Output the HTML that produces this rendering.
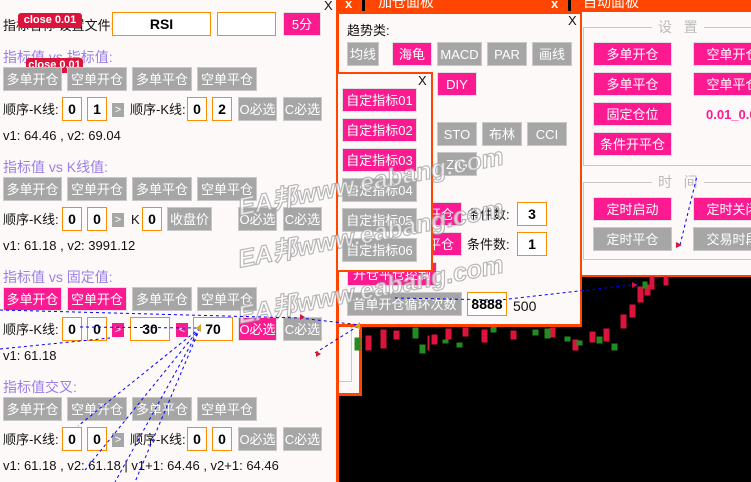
<!DOCTYPE html>
<html><head><meta charset="utf-8">
<style>
*{margin:0;padding:0;box-sizing:border-box}
body{width:751px;height:482px;overflow:hidden;position:relative;background:#000;font-family:"Liberation Sans","Noto Sans CJK SC",sans-serif;font-size:13px;color:#111}
.a{position:absolute}
.t{position:absolute;white-space:nowrap;line-height:16px}
.b{position:absolute;height:24px;line-height:24px;text-align:center;color:#fff;font-size:13px;background:#a6a6a6;border:1px solid #c8c8c8;white-space:nowrap;overflow:hidden}
.p{background:#fc1a90;border-color:#e0e0e0}
.i{position:absolute;height:24px;line-height:22px;text-align:center;border:1px solid #ff8c00;background:#fff;font-weight:bold;font-size:14px;color:#000}
.s{position:absolute;width:12px;height:14px;line-height:14px;text-align:center;color:#fff;background:#a6a6a6;font-size:11px}
.h{color:#9b7ee8;font-size:14px}
.badge{position:absolute;height:15px;line-height:15px;background:#dc143c;color:#fff;font-weight:bold;font-size:11px;border-radius:3px;text-align:center}
.wm{position:absolute;white-space:nowrap;line-height:24px;transform:rotate(-11deg);transform-origin:left top;font-size:25px;font-weight:bold;font-style:italic;color:rgba(255,255,255,0.7);-webkit-text-stroke:1.2px rgba(160,160,160,0.75)}
</style></head><body>
<!-- left panel -->
<div class="a" style="left:0;top:0;width:336px;height:482px;background:#fdf9f8"></div>
<div class="a" style="left:336px;top:0;width:3px;height:482px;background:#ff4500"></div>
<div class="t" style="left:324px;top:-2px;font-size:13px">X</div>
<div class="t" style="left:3px;top:18px">指标名称 设置文件:</div>
<div class="badge" style="left:18px;top:13px;width:64px">close 0.01</div>
<div class="i" style="left:112px;top:12px;width:99px">RSI</div>
<div class="i" style="left:217px;top:12px;width:59px"></div>
<div class="b p" style="left:283px;top:12px;width:38px;height:24px">5分</div>

<div class="t h" style="left:3px;top:49px">指标值 vs 指标值:</div>
<div class="badge" style="left:26px;top:58px;width:57px">close 0.01</div>
<div class="b" style="left:3px;top:67px;width:59px">多单开仓</div>
<div class="b" style="left:67px;top:67px;width:60px">空单开仓</div>
<div class="b" style="left:132px;top:67px;width:60px">多单平仓</div>
<div class="b" style="left:197px;top:67px;width:60px">空单平仓</div>
<div class="t" style="left:3px;top:102px">顺序-K线:</div>
<div class="i" style="left:62px;top:97px;width:20px">0</div>
<div class="i" style="left:87px;top:97px;width:20px">1</div>
<div class="s" style="left:112px;top:103px">&gt;</div>
<div class="t" style="left:130px;top:102px">顺序-K线:</div>
<div class="i" style="left:187px;top:97px;width:20px">0</div>
<div class="i" style="left:212px;top:97px;width:20px">2</div>
<div class="b" style="left:238px;top:97px;width:39px">O必选</div>
<div class="b" style="left:283px;top:97px;width:39px">C必选</div>
<div class="t" style="left:3px;top:128px">v1: 64.46 , v2: 69.04</div>

<div class="t h" style="left:3px;top:159px">指标值 vs K线值:</div>
<div class="b" style="left:3px;top:177px;width:59px">多单开仓</div>
<div class="b" style="left:67px;top:177px;width:60px">空单开仓</div>
<div class="b" style="left:132px;top:177px;width:60px">多单平仓</div>
<div class="b" style="left:197px;top:177px;width:60px">空单平仓</div>
<div class="t" style="left:3px;top:212px">顺序-K线:</div>
<div class="i" style="left:62px;top:207px;width:20px">0</div>
<div class="i" style="left:87px;top:207px;width:20px">0</div>
<div class="s" style="left:112px;top:213px">&gt;</div>
<div class="t" style="left:131px;top:212px">K</div>
<div class="i" style="left:142px;top:207px;width:20px">0</div>
<div class="b" style="left:167px;top:207px;width:45px">收盘价</div>
<div class="b" style="left:238px;top:207px;width:39px">O必选</div>
<div class="b" style="left:283px;top:207px;width:39px">C必选</div>
<div class="t" style="left:3px;top:238px">v1: 61.18 , v2: 3991.12</div>

<div class="t h" style="left:3px;top:269px">指标值 vs 固定值:</div>
<div class="b p" style="left:3px;top:287px;width:59px">多单开仓</div>
<div class="b p" style="left:67px;top:287px;width:60px">空单开仓</div>
<div class="b" style="left:132px;top:287px;width:60px">多单平仓</div>
<div class="b" style="left:197px;top:287px;width:60px">空单平仓</div>
<div class="t" style="left:3px;top:322px">顺序-K线:</div>
<div class="i" style="left:62px;top:317px;width:20px">0</div>
<div class="i" style="left:87px;top:317px;width:20px">0</div>
<div class="s" style="left:112px;top:323px;background:#fc1a90">&gt;</div>
<div class="i" style="left:130px;top:317px;width:40px">30</div>
<div class="s" style="left:176px;top:323px;background:#fc1a90">&lt;</div>
<div class="i" style="left:193px;top:317px;width:40px">70</div>
<div class="b p" style="left:238px;top:317px;width:39px">O必选</div>
<div class="b" style="left:283px;top:317px;width:39px">C必选</div>
<div class="t" style="left:3px;top:348px">v1: 61.18</div>

<div class="t h" style="left:3px;top:379px">指标值交叉:</div>
<div class="b" style="left:3px;top:397px;width:59px">多单开仓</div>
<div class="b" style="left:67px;top:397px;width:60px">空单开仓</div>
<div class="b" style="left:132px;top:397px;width:60px">多单平仓</div>
<div class="b" style="left:197px;top:397px;width:60px">空单平仓</div>
<div class="t" style="left:3px;top:432px">顺序-K线:</div>
<div class="i" style="left:62px;top:427px;width:20px">0</div>
<div class="i" style="left:87px;top:427px;width:20px">0</div>
<div class="s" style="left:112px;top:433px">&gt;</div>
<div class="t" style="left:130px;top:432px">顺序-K线:</div>
<div class="i" style="left:187px;top:427px;width:20px">0</div>
<div class="i" style="left:212px;top:427px;width:20px">0</div>
<div class="b" style="left:238px;top:427px;width:39px">O必选</div>
<div class="b" style="left:283px;top:427px;width:39px">C必选</div>
<div class="t" style="left:3px;top:458px">v1: 61.18 , v2: 61.18 | v1+1: 64.46 , v2+1: 64.46</div>

<!-- small box under middle panel -->
<div class="a" style="left:336px;top:326px;width:26px;height:70px;background:#fdf9f8;border:3px solid #ff4500;border-top:none"></div>
<div class="a" style="left:339px;top:326px;width:13px;height:56px;border:1px solid #c8c8c8;border-left:none;border-top:none"></div>

<!-- right panel -->
<div class="a" style="left:580px;top:0;width:171px;height:277px;background:#ff4500"></div>
<div class="t" style="left:583px;top:-6px;color:#fff;font-size:14px">自动面板</div>
<div class="a" style="left:582px;top:12px;width:169px;height:263px;background:#fdf9f8"></div>
<div class="a" style="left:583px;top:27px;width:170px;height:139px;border:1px solid #c8c8c8"></div>
<div class="t" style="left:652px;top:19px;background:#fdf9f8;color:#bbb;padding:0 6px;font-size:14px">设&nbsp;&nbsp;&nbsp;置</div>
<div class="b p" style="left:593px;top:42px;width:79px">多单开仓</div>
<div class="b p" style="left:693px;top:42px;width:79px">空单开仓</div>
<div class="b p" style="left:593px;top:72px;width:79px">多单平仓</div>
<div class="b p" style="left:693px;top:72px;width:79px">空单平仓</div>
<div class="b p" style="left:593px;top:102px;width:79px">固定仓位</div>
<div class="t" style="left:706px;top:107px;color:#fc1a90;font-weight:bold;font-size:13px">0.01_0.01</div>
<div class="b p" style="left:593px;top:132px;width:79px">条件开平仓</div>
<div class="a" style="left:583px;top:182px;width:170px;height:78px;border:1px solid #c8c8c8"></div>
<div class="t" style="left:652px;top:174px;background:#fdf9f8;color:#bbb;padding:0 6px;font-size:14px">时&nbsp;&nbsp;&nbsp;间</div>
<div class="b p" style="left:593px;top:197px;width:79px">定时启动</div>
<div class="b p" style="left:693px;top:197px;width:79px">定时关闭</div>
<div class="b" style="left:593px;top:227px;width:79px">定时平仓</div>
<div class="b" style="left:693px;top:227px;width:79px">交易时段</div>

<!-- candles -->
<svg class="a" style="left:0;top:0" width="751" height="482">
<g fill="#dc143c" stroke="#dc143c">
<rect x="366" y="336" width="5" height="14"/><rect x="381" y="330" width="5" height="18"/><rect x="394" y="331" width="5" height="8"/><rect x="432" y="335" width="5" height="9"/>
<rect x="428" y="336" width="1" height="14"/><rect x="446" y="329" width="5" height="10"/><rect x="463" y="328" width="5" height="8"/><rect x="482" y="330" width="5" height="12"/>
<rect x="511" y="331" width="5" height="8"/><rect x="550" y="328" width="5" height="9"/><rect x="573" y="340" width="5" height="10"/><rect x="590" y="332" width="5" height="10"/>
<rect x="604" y="329" width="5" height="12"/><rect x="621" y="315" width="5" height="13"/><rect x="630" y="305" width="5" height="12"/><rect x="638" y="287" width="5" height="15"/>
<rect x="645" y="285" width="5" height="10"/><rect x="650" y="277" width="4" height="12"/><rect x="664" y="277" width="4" height="8"/>
</g>
<g fill="#228b22" stroke="#228b22">
<rect x="355" y="338" width="5" height="12"/><rect x="413" y="328" width="5" height="10"/><rect x="420" y="345" width="5" height="8"/><rect x="443" y="340" width="5" height="3"/>
<rect x="457" y="343" width="5" height="4"/><rect x="491" y="327" width="5" height="5"/><rect x="533" y="330" width="5" height="5"/><rect x="545" y="329" width="5" height="9"/>
<rect x="565" y="337" width="5" height="4"/><rect x="577" y="341" width="5" height="4"/><rect x="597" y="337" width="5" height="6"/><rect x="612" y="344" width="5" height="6"/><rect x="643" y="282" width="4" height="6"/>
</g>
</svg>

<!-- middle panel -->
<div class="a" style="left:336px;top:0;width:246px;height:327px;background:#ff4500"></div>
<div class="t" style="left:345px;top:-4px;color:#fff;font-weight:bold">x</div>
<div class="a" style="left:362px;top:0;width:3px;height:11px;background:#000"></div>
<div class="t" style="left:378px;top:-6px;color:#fff;font-size:14px">加仓面板</div>
<div class="t" style="left:551px;top:-4px;color:#fff;font-weight:bold">x</div>
<div class="a" style="left:568px;top:0;width:3px;height:11px;background:#000"></div>
<div class="a" style="left:339px;top:14px;width:241px;height:310px;background:#fdf9f8"></div>
<div class="t" style="left:568px;top:13px">X</div>
<div class="t" style="left:347px;top:23px">趋势类:</div>
<div class="b" style="left:347px;top:42px;width:32px">均线</div>
<div class="b p" style="left:392px;top:42px;width:40px">海龟</div>
<div class="b" style="left:437px;top:42px;width:45px">MACD</div>
<div class="b" style="left:487px;top:42px;width:40px">PAR</div>
<div class="b" style="left:532px;top:42px;width:40px">画线</div>
<div class="b p" style="left:437px;top:72px;width:40px">DIY</div>
<div class="b" style="left:437px;top:122px;width:40px">STO</div>
<div class="b" style="left:482px;top:122px;width:40px">布林</div>
<div class="b" style="left:527px;top:122px;width:40px">CCI</div>
<div class="b" style="left:437px;top:152px;width:40px">ZIG</div>
<div class="b p" style="left:420px;top:202px;width:42px">开仓</div>
<div class="t" style="left:467px;top:207px">条件数:</div>
<div class="i" style="left:517px;top:202px;width:30px">3</div>
<div class="b p" style="left:420px;top:232px;width:42px">平仓</div>
<div class="t" style="left:467px;top:237px">条件数:</div>
<div class="i" style="left:517px;top:232px;width:30px">1</div>
<div class="b p" style="left:347px;top:262px;width:90px">开仓平仓控制</div>
<div class="b" style="left:347px;top:292px;width:115px">首单开仓循环次数</div>
<div class="i" style="left:467px;top:292px;width:40px">8888</div>
<div class="t" style="left:513px;top:298px;font-size:14px">500</div>

<!-- custom indicators popup -->
<div class="a" style="left:336px;top:72px;width:97px;height:200px;background:#fdf9f8;border:2px solid #ff4500"></div>
<div class="t" style="left:418px;top:73px">X</div>
<div class="b p" style="left:342px;top:88px;width:75px">自定指标01</div>
<div class="b p" style="left:342px;top:118px;width:75px">自定指标02</div>
<div class="b p" style="left:342px;top:148px;width:75px">自定指标03</div>
<div class="b" style="left:342px;top:178px;width:75px">自定指标04</div>
<div class="b" style="left:342px;top:208px;width:75px">自定指标05</div>
<div class="b" style="left:342px;top:238px;width:75px">自定指标06</div>

<!-- watermarks -->
<div class="wm" style="left:236px;top:196px">EA邦www.eabang.com</div>
<div class="wm" style="left:236px;top:248px">EA邦www.eabang.com</div>
<div class="wm" style="left:236px;top:304px">EA邦www.eabang.com</div>

<!-- dashed lines -->
<svg class="a" style="left:0;top:0" width="751" height="482">
<g stroke="#0000ff" stroke-width="1" stroke-dasharray="3,3" fill="none">
<path d="M0 310 L300 318 L360 325"/><path d="M80 327 L200 328"/><path d="M0 349 L110 338"/>
<path d="M200 328 L78 426"/><path d="M200 328 L115 482"/><path d="M200 328 L135 482"/><path d="M200 328 L85 470"/>
<path d="M315 353 L360 325"/><path d="M395 298 L500 300 L640 284"/><path d="M680 245 L697 176"/>
</g>
<g fill="#dc143c"><path d="M300 314 l5 3 -5 3z"/><path d="M316 351 l5 3 -5 3z"/><path d="M676 242 l6 3 -6 3z"/><path d="M632 282 l5 3 -5 3z"/></g>
<g fill="#daa520"><path d="M201 324 l-5 4 5 4z"/><path d="M360 322 l-5 4 5 4z"/></g>
</svg>
</body></html>
